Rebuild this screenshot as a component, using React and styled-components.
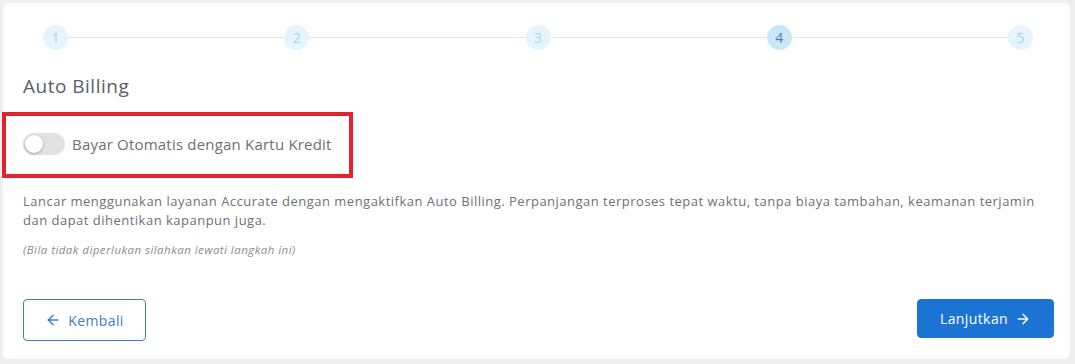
import React, { useState } from "react";
import styled, { createGlobalStyle } from "styled-components";
import { ArrowLeft, ArrowRight } from "lucide-react";

const GlobalStyle = createGlobalStyle`
  body {
    margin: 0;
    background: #efefef;
    font-family: "Open Sans", "Liberation Sans", sans-serif;
  }
  #root {
    padding: 3px 5px 5px 3px;
  }
`;

const Card = styled.div`
  background: #fff;
  border-radius: 6px;
  height: 356px;
  box-sizing: border-box;
  padding: 22px 16px 0 20px;
  display: flex;
  flex-direction: column;
`;

const Stepper = styled.div`
  display: flex;
  align-items: center;
  margin: 0 21px 0 20px;
`;

const StepDot = styled.div`
  width: 25px;
  height: 25px;
  border-radius: 50%;
  flex-shrink: 0;
  display: flex;
  align-items: center;
  justify-content: center;
  font-size: 14px;
  background: ${p => (p.active ? "#c9e7fb" : "#e6f4fd")};
  color: ${p => (p.active ? "#4d82b0" : "#a3d4f3")};
`;

const StepLine = styled.div`
  flex: 1;
  height: 1px;
  background: #e6e6e6;
`;

const Title = styled.h2`
  margin: 24px 0 0;
  font-size: 19px;
  line-height: 24px;
  font-weight: 500;
  letter-spacing: 0.5px;
  color: #5c5c6b;
`;

const Highlight = styled.div`
  align-self: flex-start;
  margin: 14px 0 0 -21px;
  border: 4px solid #e3232b;
  padding: 17px 17px 19px;
  display: flex;
  align-items: center;
  gap: 7px;
`;

const Track = styled.button`
  position: relative;
  width: 42px;
  height: 22px;
  border: none;
  border-radius: 11px;
  padding: 0;
  cursor: pointer;
  background: ${p => (p.on ? "#1b74d4" : "#e2e2e2")};
`;

const Knob = styled.span`
  position: absolute;
  top: 2px;
  left: ${p => (p.on ? "22px" : "2px")};
  width: 18px;
  height: 18px;
  border-radius: 50%;
  background: #fff;
  box-shadow: 0 1px 3px rgba(0, 0, 0, 0.3);
`;

const ToggleLabel = styled.span`
  font-size: 15px;
  letter-spacing: 0.2px;
  color: #707070;
`;

const Paragraph = styled.p`
  margin: 14px 0 0;
  font-size: 13px;
  line-height: 18.5px;
  letter-spacing: 0.49px;
  color: #6f6f78;
`;

const Note = styled.p`
  margin: 13px 0 0;
  font-size: 11.5px;
  line-height: 16px;
  letter-spacing: 0.45px;
  font-style: italic;
  color: #8c8c8c;
`;

const Actions = styled.div`
  margin-top: 41px;
  display: flex;
  justify-content: space-between;
  align-items: flex-start;
`;

const Button = styled.button`
  display: flex;
  align-items: center;
  justify-content: center;
  gap: 7px;
  border-radius: 4px;
  font-family: inherit;
  font-size: 14px;
  letter-spacing: 0.4px;
  cursor: pointer;
  width: ${p => (p.primary ? "137px" : "123px")};
  height: ${p => (p.primary ? "39px" : "42px")};
  border: 1px solid ${p => (p.primary ? "#1b74d4" : "#3b7fc4")};
  background: ${p => (p.primary ? "#1b74d4" : "#fff")};
  color: ${p => (p.primary ? "#fff" : "#3b7fc4")};
`;

const steps = [1, 2, 3, 4, 5];

export default function App() {
  const [on, setOn] = useState(false);

  return (
    <>
      <GlobalStyle />
      <Card>
        <Stepper>
          {steps.map((n, i) => (
            <React.Fragment key={n}>
              {i > 0 && <StepLine />}
              <StepDot active={n === 4}>{n}</StepDot>
            </React.Fragment>
          ))}
        </Stepper>
        <Title>Auto Billing</Title>
        <Highlight>
          <Track on={on} onClick={() => setOn(!on)}>
            <Knob on={on} />
          </Track>
          <ToggleLabel>Bayar Otomatis dengan Kartu Kredit</ToggleLabel>
        </Highlight>
        <Paragraph>
          Lancar menggunakan layanan Accurate dengan mengaktifkan Auto Billing.
          Perpanjangan terproses tepat waktu, tanpa biaya tambahan, keamanan
          terjamin dan dapat dihentikan kapanpun juga.
        </Paragraph>
        <Note>(Bila tidak diperlukan silahkan lewati langkah ini)</Note>
        <Actions>
          <Button>
            <ArrowLeft size={16} strokeWidth={2.2} />
            Kembali
          </Button>
          <Button primary>
            Lanjutkan
            <ArrowRight size={16} strokeWidth={2.2} />
          </Button>
        </Actions>
      </Card>
    </>
  );
}
